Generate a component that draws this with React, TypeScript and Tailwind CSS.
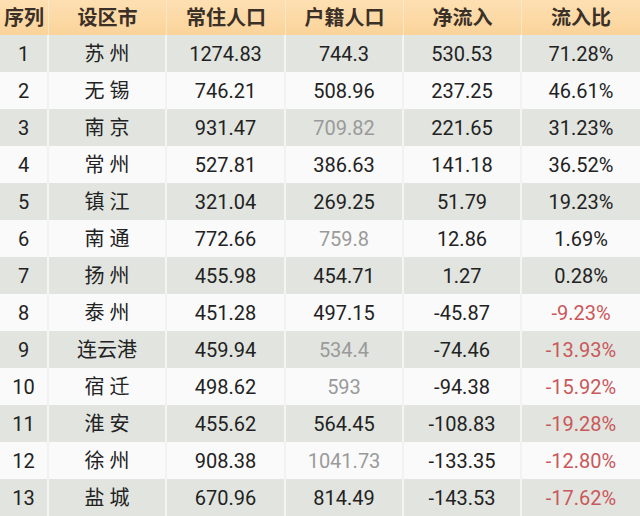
import React from "react";

type Row = [string, string, string, string, boolean, string, string];

const rows: Row[] = [
  ["1", "苏州", "1274.83", "744.3", false, "530.53", "71.28%"],
  ["2", "无锡", "746.21", "508.96", false, "237.25", "46.61%"],
  ["3", "南京", "931.47", "709.82", true, "221.65", "31.23%"],
  ["4", "常州", "527.81", "386.63", false, "141.18", "36.52%"],
  ["5", "镇江", "321.04", "269.25", false, "51.79", "19.23%"],
  ["6", "南通", "772.66", "759.8", true, "12.86", "1.69%"],
  ["7", "扬州", "455.98", "454.71", false, "1.27", "0.28%"],
  ["8", "泰州", "451.28", "497.15", false, "-45.87", "-9.23%"],
  ["9", "连云港", "459.94", "534.4", true, "-74.46", "-13.93%"],
  ["10", "宿迁", "498.62", "593", true, "-94.38", "-15.92%"],
  ["11", "淮安", "455.62", "564.45", false, "-108.83", "-19.28%"],
  ["12", "徐州", "908.38", "1041.73", true, "-133.35", "-12.80%"],
  ["13", "盐城", "670.96", "814.49", false, "-143.53", "-17.62%"],
];

const cols = "grid grid-cols-[49px_118px_119px_118px_118px_118px]";

export default function App() {
  return (
    <div
      className="w-[640px] h-[516px] overflow-hidden bg-[#fafafa] text-[#222]"
      style={{ fontFamily: 'Roboto, "Noto Sans CJK SC", sans-serif' }}
    >
      <div className={`${cols} h-[35px] bg-gradient-to-b from-[#fde0b2] to-[#fbd39a] font-bold text-[20px] text-[#3a3028]`}>
        {["序列", "设区市", "常住人口", "户籍人口", "净流入", "流入比"].map((h, i) => (
          <div
            key={h}
            className={`flex items-center justify-center ${i < 5 ? "border-r border-[#fbe8cc]" : ""}`}
          >
            {h}
          </div>
        ))}
      </div>
      {rows.map((r, idx) => {
        const gray = idx % 2 === 0;
        const neg = r[6].startsWith("-");
        return (
          <div
            key={r[0]}
            className={`${cols} h-[37px] text-[20px] ${gray ? "bg-[#e1e4df]" : "bg-[#fafafa]"}`}
          >
            <div className={`flex items-center justify-center border-r-2 ${gray ? "border-[#f4f5f3]" : "border-[#f2f2f2]"}`}>{r[0]}</div>
            <div className={`flex items-center justify-center border-r-2 ${gray ? "border-[#f4f5f3]" : "border-[#f2f2f2]"} ${r[1].length === 2 ? "tracking-[5px] pl-[5px]" : ""}`}>{r[1]}</div>
            <div className={`flex items-center justify-center border-r-2 ${gray ? "border-[#f4f5f3]" : "border-[#f2f2f2]"}`}>{r[2]}</div>
            <div className={`flex items-center justify-center border-r-2 ${gray ? "border-[#f4f5f3]" : "border-[#f2f2f2]"} ${r[4] ? "text-[#9a9a9a]" : ""}`}>{r[3]}</div>
            <div className={`flex items-center justify-center border-r-2 ${gray ? "border-[#f4f5f3]" : "border-[#f2f2f2]"}`}>{r[5]}</div>
            <div className={`flex items-center justify-center ${neg ? "text-[#c9585a]" : ""}`}>{r[6]}</div>
          </div>
        );
      })}
    </div>
  );
}
